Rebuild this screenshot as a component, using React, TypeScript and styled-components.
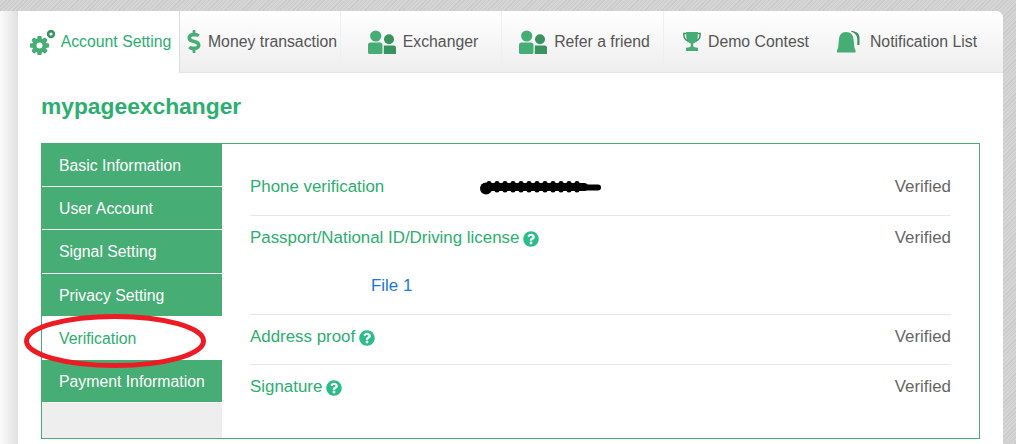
import React from "react";
import styled, { createGlobalStyle } from "styled-components";
import { FaDollarSign, FaQuestionCircle } from "react-icons/fa";

const GREEN = "#46ad74";
const DARK_GREEN = "#38935f";
const TEXT_GREEN = "#2cae70";

const GlobalStyle = createGlobalStyle`
  html, body {
    margin: 0;
    padding: 0;
    height: 100%;
    overflow: hidden;
  }
  body {
    font-family: "Liberation Sans", Arial, sans-serif;
    font-size: 15.8px;
    background: repeating-linear-gradient(135deg, #d3d3d3 0 1px, #cbcbcb 1px 2px, #d6d6d6 2px 3px);
  }
`;

const GearIcon = () => (
  <svg width="25" height="25" viewBox="0 0 25 25" fill="none">
    <g fill={GREEN}>
      {[0, 45, 90, 135, 180, 225, 270, 315].map((a) => (
        <rect key={a} x="7.500" y="6" width="4" height="19" rx="1" transform={`rotate(${a} 9.5 15.5)`} />
      ))}
    </g>
    <circle cx="9.500" cy="15.500" r="5.200" stroke={GREEN} strokeWidth="4" />
    <circle cx="9.500" cy="15.500" r="3" fill="#fff" />
    <circle cx="21" cy="4" r="2.900" stroke={DARK_GREEN} strokeWidth="2.600" />
  </svg>
);

const UsersIcon = () => (
  <svg width="28" height="24" viewBox="0 0 28 24">
    <circle cx="21" cy="9.300" r="5" fill={DARK_GREEN} />
    <path d="M15.800 15.500h9.700a2.500 2.500 0 0 1 2.500 2.500v6H15.800z" fill={DARK_GREEN} />
    <circle cx="7.700" cy="6" r="5.600" fill={GREEN} />
    <path d="M2.500 12.500h9.500a2.500 2.500 0 0 1 2.500 2.500v7.500a1.500 1.500 0 0 1-1.500 1.500H1.500A1.500 1.500 0 0 1 0 22.500V15a2.500 2.500 0 0 1 2.500-2.500z" fill={GREEN} />
  </svg>
);

const TrophyIcon = () => (
  <svg width="18" height="19" viewBox="0 0 18 19">
    <path d="M3 0h12l-.4 6.500C14.200 9.500 12 11 10.200 11.600v2.600c0 .8 1.800 1.300 4.800 1.600V19H3v-3.200c3-.3 4.800-.8 4.800-1.600v-2.600C6 11 3.800 9.500 3.400 6.500z" fill={GREEN} />
    <path d="M3 1.500H.8c0 4 1 6.500 4.200 7.500M15 1.500h2.200c0 4-1 6.500-4.200 7.500" fill="none" stroke={DARK_GREEN} strokeWidth="1.400" />
  </svg>
);

const BellIcon = () => (
  <svg width="23" height="22" viewBox="0 0 23 22">
    <path d="M14 0c5 0 8.500 2 8.500 7v7h-2.200V8c0-3.500-2.300-6-6.300-7.500z" fill={DARK_GREEN} />
    <path d="M9 1c5 0 7 3 7.500 7l.8 8c.2 1.500.7 2.500 1.200 3.200V21.500H0v-2.300c.5-.7 1-1.700 1.200-3.200l.8-8C2.500 4 4.500 1 9 1z" fill={GREEN} />
  </svg>
);

const Page = styled.div`
  display: flex;
  width: 1016px;
  height: 444px;
  padding-top: 11px;
  box-sizing: border-box;
  overflow: hidden;
`;

const LeftShade = styled.div`
  width: 18px;
  flex: none;
  background: linear-gradient(to right, #fbfbfb, #e0e0e0);
`;

const Card = styled.div`
  width: 985px;
  flex: none;
  background: #fff;
  border-top-right-radius: 7px;
  overflow: hidden;
`;

const TabBar = styled.div`
  display: flex;
  height: 62px;
  box-sizing: border-box;
  background: linear-gradient(to bottom, #ffffff, #eeeeee);
  border-bottom: 1px solid #e4e4e4;
`;

const Tab = styled.div<{ $active?: boolean; $plain?: boolean; $width: number; $gap: number }>`
  width: ${({ $width }) => $width}px;
  flex: none;
  box-sizing: border-box;
  height: ${({ $active }) => ($active ? "62px" : "61px")};
  display: flex;
  align-items: center;
  justify-content: center;
  gap: ${({ $gap }) => $gap}px;
  padding-left: 4px;
  color: ${({ $active }) => ($active ? TEXT_GREEN : "#555")};
  background: ${({ $active }) => ($active ? "#fff" : "transparent")};
  border-right: 1px solid ${({ $active, $plain }) => ($active ? "#dcdcdc" : $plain ? "transparent" : "#efefef")};
  white-space: nowrap;
`;

const DollarIcon = styled(FaDollarSign)`
  color: ${GREEN};
  width: 14px;
  height: 23px;
`;

const Body = styled.div`
  padding: 0 23px;
`;

const Title = styled.h1`
  margin: 0;
  height: 70px;
  padding-top: 20px;
  box-sizing: border-box;
  font-size: 22.8px;
  line-height: 26px;
  font-weight: 700;
  color: ${TEXT_GREEN};
`;

const Panel = styled.div`
  position: relative;
  display: flex;
  height: 296px;
  box-sizing: border-box;
  border: 1px solid ${GREEN};
`;

const Sidebar = styled.div`
  width: 180px;
  flex: none;
  background: #eeeeee;
`;

const SideItem = styled.div<{ $active?: boolean }>`
  height: 43px;
  box-sizing: border-box;
  padding: 0 17px;
  line-height: 43px;
  color: ${({ $active }) => ($active ? TEXT_GREEN : "#fff")};
  background: ${({ $active }) => ($active ? "#fff" : GREEN)};
  border-bottom: 1px solid #fff;
  white-space: nowrap;

  &:nth-child(3) {
    height: 44px;
  }
`;

const Content = styled.div`
  flex: 1;
  padding: 15px 28px 0;
  font-size: 16.9px;
`;

const Row = styled.div<{ $first?: boolean; $bottom: number; $last?: boolean }>`
  padding-top: ${({ $first }) => ($first ? 17 : 11)}px;
  padding-bottom: ${({ $bottom }) => $bottom}px;
  border-bottom: ${({ $last }) => ($last ? "none" : "1px solid #e6e6e6")};
`;

const RowLine = styled.div`
  display: flex;
  align-items: center;
  height: 22px;
  line-height: 22px;
`;

const Label = styled.span<{ $width?: number }>`
  color: ${TEXT_GREEN};
  ${({ $width }) => ($width ? `width: ${$width}px;` : "")}
  flex: none;
`;

const Help = styled(FaQuestionCircle)`
  color: #2bbd87;
  width: 16px;
  height: 16px;
  margin-left: 4px;
  margin-top: 2px;
`;

const Status = styled.span`
  margin-left: auto;
  color: #666;
`;

const FileLink = styled.a`
  display: block;
  margin: 26px 0 0 121px;
  line-height: 22px;
  color: #1a78d2;
`;

const Scribble = styled.svg`
  display: block;
  flex: none;
`;

const RedCircle = styled.svg`
  position: absolute;
  left: -18px;
  top: 169px;
  pointer-events: none;
`;

const tabs = [
  { label: "Account Setting", icon: <GearIcon />, width: 162, gap: 6, active: true },
  { label: "Money transaction", icon: <DollarIcon />, width: 161, gap: 7 },
  { label: "Exchanger", icon: <UsersIcon />, width: 161, gap: 7 },
  { label: "Refer a friend", icon: <UsersIcon />, width: 162, gap: 7 },
  { label: "Demo Contest", icon: <TrophyIcon />, width: 161, gap: 7, plain: true },
  { label: "Notification List", icon: <BellIcon />, width: 161, gap: 10, plain: true },
];

const menu = ["Basic Information", "User Account", "Signal Setting", "Privacy Setting", "Verification", "Payment Information"];

export default function App() {
  return (
    <>
      <GlobalStyle />
      <Page>
        <LeftShade />
        <Card>
          <TabBar>
            {tabs.map((t) => (
              <Tab key={t.label} $active={t.active} $plain={t.plain} $width={t.width} $gap={t.gap}>
                {t.icon}
                <span>{t.label}</span>
              </Tab>
            ))}
          </TabBar>
          <Body>
            <Title>mypageexchanger</Title>
            <Panel>
              <Sidebar>
                {menu.map((m) => (
                  <SideItem key={m} $active={m === "Verification"}>{m}</SideItem>
                ))}
              </Sidebar>
              <Content>
                <Row $first $bottom={17}>
                  <RowLine>
                    <Label $width={230}>Phone verification</Label>
                    <Scribble width="122" height="15" viewBox="0 0 122 15">
                      <circle cx="6" cy="8.500" r="6" fill="#000" />
                      <path d="M6 7 L104 7" fill="none" stroke="#000" strokeWidth="8" strokeLinecap="round" />
                      <path d="M104 7.500 L118 7.500" fill="none" stroke="#000" strokeWidth="6" strokeLinecap="round" />
                      <path d="M9 3.500 L104 3.500 M9 10 L104 10" fill="none" stroke="#000" strokeWidth="5" strokeLinecap="round" strokeDasharray="0 8" />
                    </Scribble>
                    <Status>Verified</Status>
                  </RowLine>
                </Row>
                <Row $bottom={17}>
                  <RowLine>
                    <Label>Passport/National ID/Driving license</Label>
                    <Help />
                    <Status>Verified</Status>
                  </RowLine>
                  <FileLink>File 1</FileLink>
                </Row>
                <Row $bottom={16}>
                  <RowLine>
                    <Label>Address proof</Label>
                    <Help />
                    <Status>Verified</Status>
                  </RowLine>
                </Row>
                <Row $bottom={17} $last>
                  <RowLine>
                    <Label>Signature</Label>
                    <Help />
                    <Status>Verified</Status>
                  </RowLine>
                </Row>
              </Content>
              <RedCircle width="182" height="56" viewBox="0 0 182 56" fill="none">
                <ellipse cx="91" cy="28" rx="88.500" ry="24.500" stroke="#ed1c24" strokeWidth="5" />
              </RedCircle>
            </Panel>
          </Body>
        </Card>
      </Page>
    </>
  );
}
